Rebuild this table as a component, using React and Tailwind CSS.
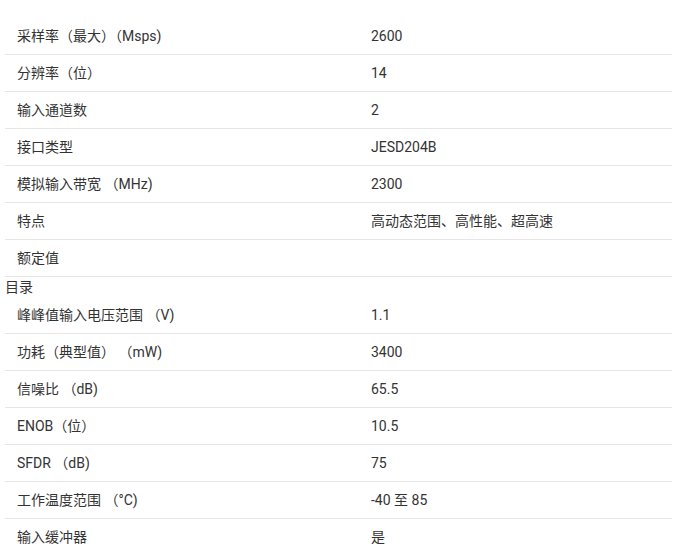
// Spec table – ADC parameters
const specs = [
    ["采样率（最大）（Msps)", "2600"],
    ["分辨率（位）", "14"],
    ["输入通道数", "2"],
    ["接口类型", "JESD204B"],
    ["模拟输入带宽 （MHz)", "2300"],
    ["特点", "高动态范围、高性能、超高速"],
    ["额定值", ""],
];

const catalog = [
    ["峰峰值输入电压范围 （V)", "1.1"],
    ["功耗（典型值） （mW)", "3400"],
    ["信噪比 （dB)", "65.5"],
    ["ENOB（位）", "10.5"],
    ["SFDR （dB)", "75"],
    ["工作温度范围 （°C)", "-40 至 85"],
    ["输入缓冲器", "是"],
];

function Row({ label, value }) {
    return (
        <div className="grid grid-cols-[354px_1fr] h-[37px] border-b border-[#e6e6e6] items-center">
            <div className="pl-3 whitespace-pre">{label}</div>
            <div className="pl-3">{value}</div>
        </div>
    );
}

export default function App() {
    return (
        <div
            className="w-[680px] h-[553px] overflow-hidden bg-white text-[14px] text-[#333333]"
            style={{ fontFamily: 'Roboto, "Noto Sans CJK SC", sans-serif' }}
        >
            <div className="ml-[5px] w-[667px] pt-[18px]">
                {specs.map(([l, v]) => (
                    <Row key={l} label={l} value={v} />
                ))}
                <div className="h-5 leading-5">目录</div>
                {catalog.map(([l, v]) => (
                    <Row key={l} label={l} value={v} />
                ))}
            </div>
        </div>
    );
}
